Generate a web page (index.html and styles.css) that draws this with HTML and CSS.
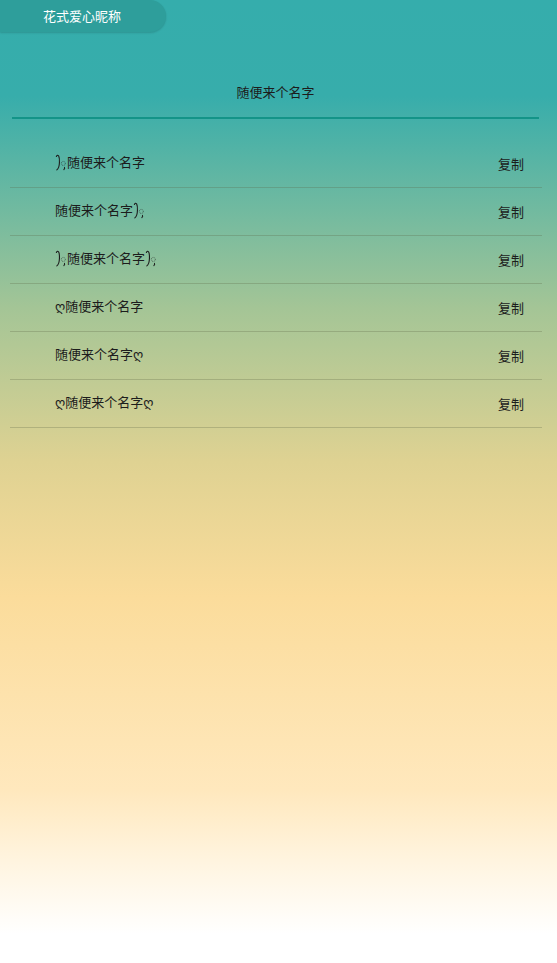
FILE: index.html
```html
<!DOCTYPE html>
<html lang="zh-CN">

<head>
    <meta charset="UTF-8">
    <meta name="viewport" content="width=device-width, initial-scale=1.0">
    <title>花式爱心昵称</title>
    <link rel="stylesheet" href="styles.css">
</head>

<body>
    <div class="page">
        <div class="tab">花式爱心昵称</div>

        <div class="title-wrap">
            <div class="title">随便来个名字</div>
        </div>

        <ul class="names">
            <li class="name-row">
                <span class="name"><svg class="curl" viewBox="0 0 13 20"><use href="#curl"/></svg>随便来个名字</span>
                <span class="copy">复制</span>
            </li>
            <li class="name-row">
                <span class="name">随便来个名字<svg class="curl" viewBox="0 0 13 20"><use href="#curl"/></svg></span>
                <span class="copy">复制</span>
            </li>
            <li class="name-row">
                <span class="name"><svg class="curl" viewBox="0 0 13 20"><use href="#curl"/></svg>随便来个名字<svg class="curl" viewBox="0 0 13 20"><use href="#curl"/></svg></span>
                <span class="copy">复制</span>
            </li>
            <li class="name-row">
                <span class="name">ღ随便来个名字</span>
                <span class="copy">复制</span>
            </li>
            <li class="name-row">
                <span class="name">随便来个名字ღ</span>
                <span class="copy">复制</span>
            </li>
            <li class="name-row">
                <span class="name">ღ随便来个名字ღ</span>
                <span class="copy">复制</span>
            </li>
        </ul>
    </div>

    <svg width="0" height="0" class="defs">
        <symbol id="curl" viewBox="0 0 13 20">
            <path d="M1.5 3.5 Q2.5 1 4 3 Q5 5 4.8 10 Q4.6 16 2 18" fill="none" stroke="#1c1c1c" stroke-width="1.2" stroke-linecap="round"/>
            <circle cx="9" cy="11" r="2.2" fill="none" stroke="#1c1c1c" stroke-width="0.6" stroke-dasharray="0.9 0.8"/>
            <path d="M10.3 15.2 Q11 16.2 9.6 17.8" fill="none" stroke="#1c1c1c" stroke-width="1.1" stroke-linecap="round"/>
        </symbol>
    </svg>
</body>

</html>
```

FILE: styles.css
```css
html,
body {
    margin: 0;
    padding: 0;
}

body {
    font-family: "Noto Sans CJK SC", "DejaVu Sans", sans-serif;
    color: #1c1c1c;
    min-height: 100vh;
    background: linear-gradient(to bottom, #35adac 0%, #37adab 10%, #a4c596 32%, #dfd292 48%, #fbdc9b 62%, #ffe8bd 82%, #fff5e2 90%, #fff 97%);
    background-attachment: fixed;
}

.page {
    min-height: 963px;
}

.defs {
    position: absolute;
}

.tab {
    width: 166px;
    height: 32px;
    line-height: 31px;
    box-sizing: border-box;
    padding-right: 2px;
    text-align: center;
    font-size: 13px;
    color: #fff;
    background-color: #2e9e9b;
    border-radius: 0 16px 16px 0;
    box-shadow: 0 1px 2px rgba(0, 0, 0, 0.15);
}

.title-wrap {
    margin: 0 18px 0 12px;
    padding-top: 49px;
    border-bottom: 2px solid #139488;
}

.title {
    text-align: center;
    font-size: 13px;
    line-height: 22px;
    padding-bottom: 14px;
}

.names {
    list-style: none;
    margin: 21px 0 0 0;
    padding: 0 15px 0 10px;
}

.name-row {
    display: flex;
    align-items: center;
    justify-content: space-between;
    height: 47px;
    border-bottom: 1px solid rgba(90, 100, 70, 0.28);
    font-size: 13px;
    padding: 0 18px 0 45px;
}

.name {
    display: flex;
    align-items: center;
    position: relative;
    top: -2px;
}

.curl {
    width: 12px;
    height: 19px;
    margin-top: 2px;
}

.copy {
    position: relative;
    top: 0;
}
```
